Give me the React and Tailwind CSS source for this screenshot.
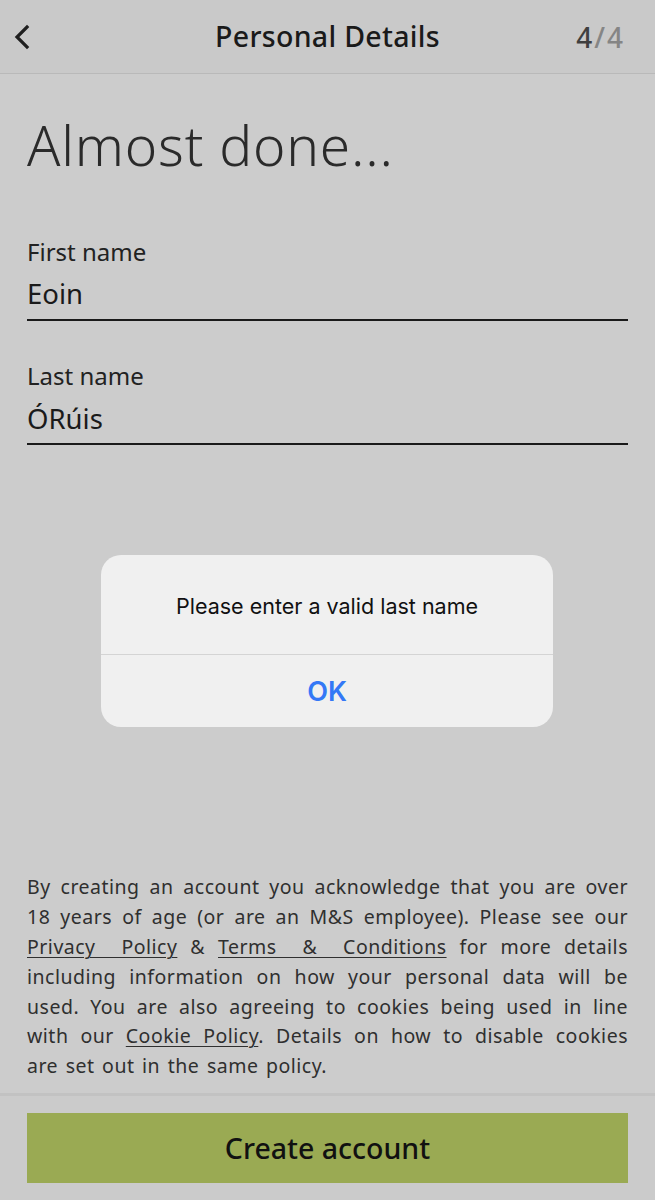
import React from "react";

const lines = [
  [{ t: "By creating an account you acknowledge that you are over" }],
  [{ t: "18 years of age (or are an M&S employee). Please see our" }],
  [
    { t: "Privacy\u00a0\u00a0Policy", u: true },
    { t: " & " },
    { t: "Terms\u00a0\u00a0&\u00a0\u00a0Conditions", u: true },
    { t: " for more details" },
  ],
  [{ t: "including information on how your personal data will be" }],
  [{ t: "used. You are also agreeing to cookies being used in line" }],
  [{ t: "with our " }, { t: "Cookie\u00a0Policy", u: true }, { t: ". Details on how to disable cookies" }],
];

export default function App() {
  const font = { fontFamily: '"Noto Sans", "Open Sans", sans-serif' };
  return (
    <div className="relative w-[655px] h-[1200px] bg-[#cccccc] flex flex-col text-[#1a1a1a] overflow-hidden" style={font}>
      <header className="h-[74px] shrink-0 bg-[#c9c9c9] border-b border-[#b9b9b9] flex items-center relative">
        <div className="w-[80px] pl-[13px] flex items-center">
          <svg width="18" height="26" viewBox="0 0 18 26" fill="none">
            <path d="M14 3 L4 13 L14 23" stroke="#1f1f1f" strokeWidth="3.2" strokeLinecap="square" />
          </svg>
        </div>
        <div className="flex-1 text-center text-[28.5px] font-medium tracking-[0.3px] leading-none">Personal Details</div>
        <div className="w-[80px] pr-[30px] text-right text-[28px] font-medium leading-none whitespace-nowrap tracking-[2px]">
          <span className="text-[#3f3f3f]">4</span>
          <span className="text-[#858585]">/4</span>
        </div>
      </header>

      <main className="flex-1 flex flex-col px-[27px]">
        <h1 className="mt-[43px] text-[55px] font-light leading-none text-[#2a2a2a] tracking-[0.8px]">Almost done...</h1>

        <div className="mt-[68px]">
          <div className="text-[24px] leading-none text-[#222]">First name</div>
          <div className="mt-[16px] text-[27.5px] leading-none text-[#1a1a1a]">Eoin</div>
          <div className="mt-[11px] h-[2px] bg-[#1a1a1a]" />
        </div>

        <div className="mt-[43px]">
          <div className="text-[24px] leading-none text-[#222]">Last name</div>
          <div className="mt-[17px] text-[27.5px] leading-none text-[#1a1a1a]">ÓRúis</div>
          <div className="mt-[11px] h-[2px] bg-[#1a1a1a]" />
        </div>

        <div className="flex-1" />

        <div className="text-[19.5px] leading-[29.8px] text-[#2f2f2f] mb-[12px] tracking-[0.5px] [word-spacing:2px]">
          {lines.map((line, i) => (
            <div key={i} className="text-justify [text-align-last:justify] whitespace-nowrap">
              {line.map((s, j) =>
                s.u ? (
                  <span key={j} className="underline underline-offset-[3px] decoration-1">{s.t}</span>
                ) : (
                  <span key={j}>{s.t}</span>
                )
              )}
            </div>
          ))}
          <div>are set out in the same policy.</div>
        </div>
      </main>

      <footer className="shrink-0 border-t-[3px] border-[#c2c2c2] bg-[#cbcbcb] px-[27px] pt-[17px] pb-[17px]">
        <div className="h-[70px] bg-[#9aaa53] flex items-center justify-center text-[28.5px] font-medium text-[#111]">
          Create account
        </div>
      </footer>

      <div className="absolute left-[101px] top-[555px] w-[452px] h-[172px] rounded-[20px] bg-[#f0f0f0] flex flex-col" style={{ fontFamily: 'Inter, "Liberation Sans", sans-serif' }}>
        <div className="h-[99px] flex items-center justify-center text-[21.5px] text-[#111] pt-[3px]">
          Please enter a valid last name
        </div>
        <div className="h-[1px] bg-[#d4d4d4]" />
        <div className="flex-1 flex items-center justify-center text-[27px] font-semibold text-[#3478f6] pt-[2px]">OK</div>
      </div>
    </div>
  );
}
